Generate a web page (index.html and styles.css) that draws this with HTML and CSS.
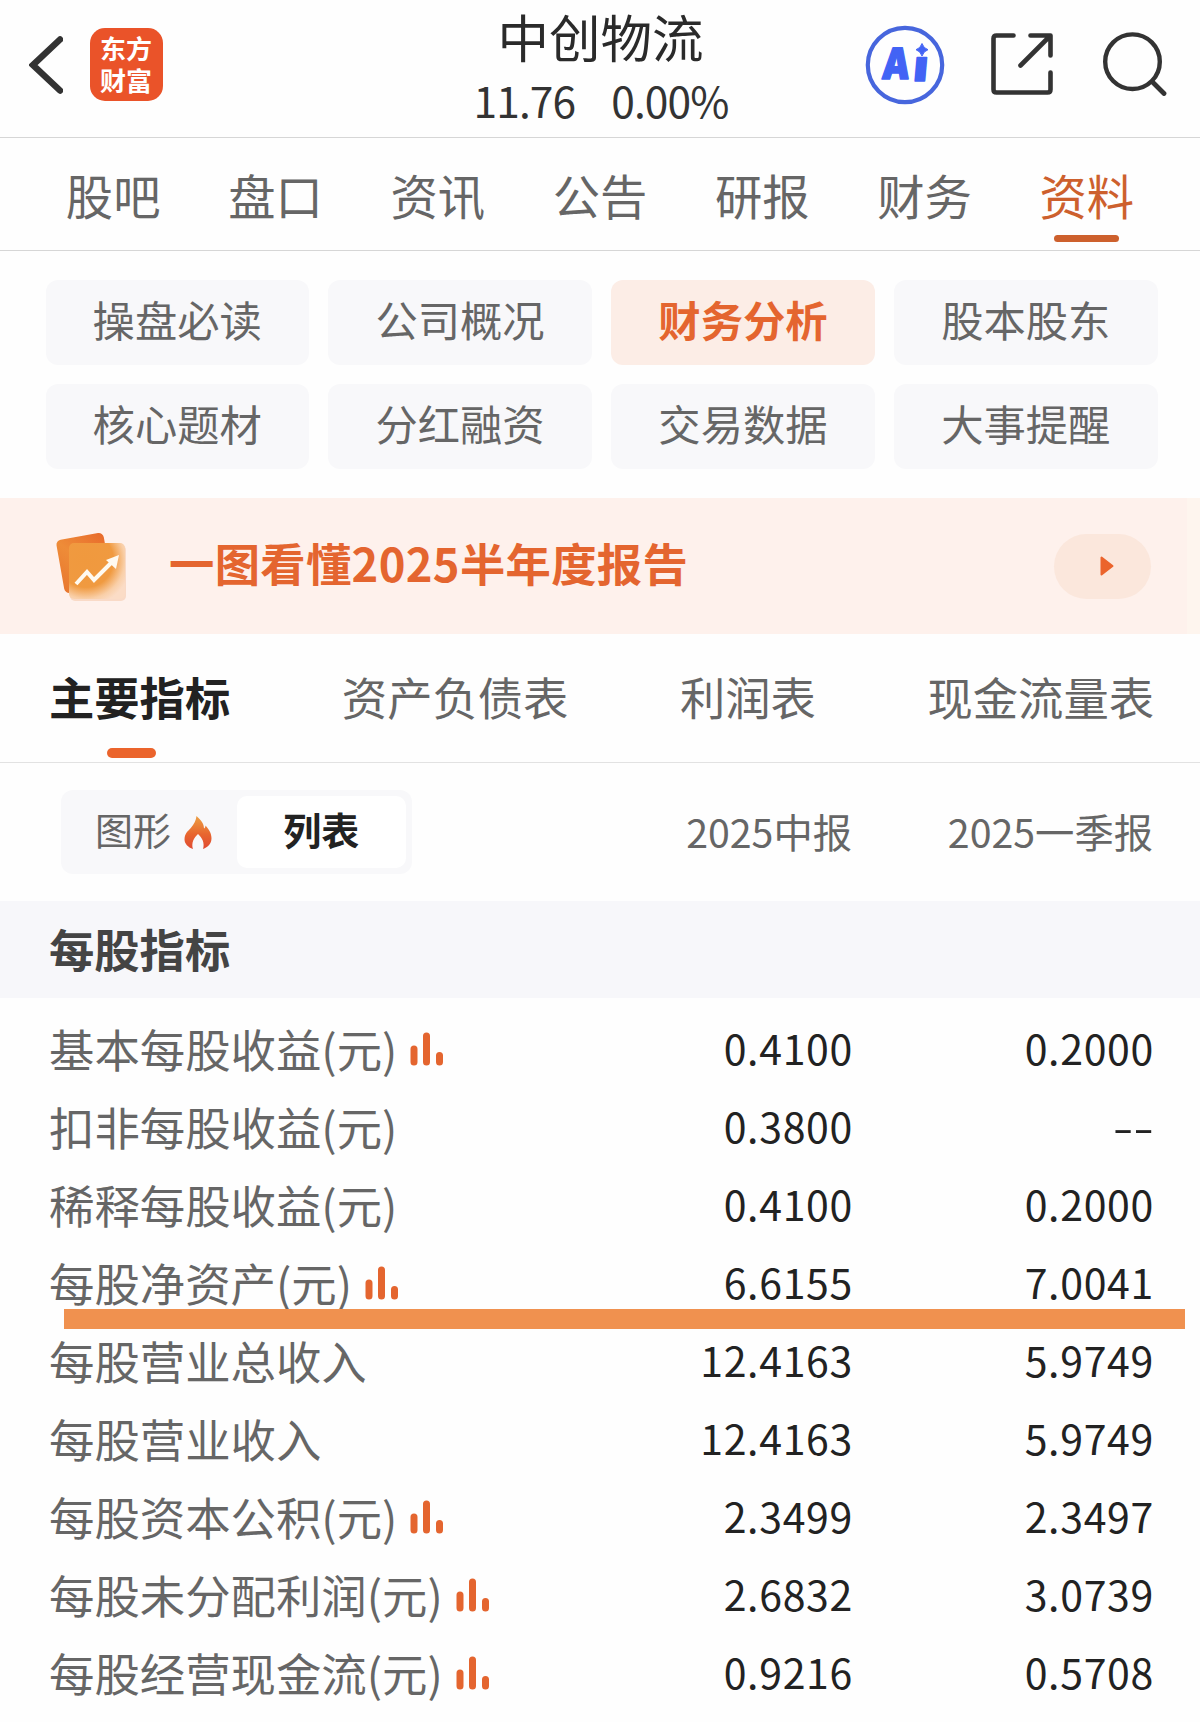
FILE: index.html
```html
<!DOCTYPE html>
<html lang="zh-CN">
<head>
    <meta charset="UTF-8">
    <meta name="viewport" content="width=device-width, initial-scale=1.0">
    <title>中创物流 - 财务分析</title>
    <link rel="stylesheet" href="styles.css">
</head>
<body>
    <svg width="0" height="0" class="defs">
        <symbol id="bars" viewBox="0 0 34 34">
            <path d="M4 17v13M16.500 4v26M29.500 23.500V30" fill="none" stroke="#e4652f" stroke-width="7" stroke-linecap="round"/>
        </symbol>
    </svg>

    <header class="header">
        <div class="header-left">
            <svg class="back" width="34" height="58" viewBox="0 0 34 58">
                <path d="M31 3.500L4 29l27 25.500" fill="none" stroke="#333" stroke-width="6.500" stroke-linecap="round"/>
            </svg>
            <div class="logo">东方财富</div>
        </div>
        <div class="stock">
            <h1>中创物流</h1>
            <p><span>11.76</span><span>0.00%</span></p>
        </div>
        <div class="header-right">
            <svg width="80" height="80" viewBox="0 0 80 80">
                <circle cx="40" cy="40" r="37.2" fill="none" stroke="#4766dd" stroke-width="4.2"/>
                <g class="ai-text" transform="translate(0 54) skewX(-5)">
                    <text x="16" y="0" textLength="28" lengthAdjust="spacingAndGlyphs">A</text>
                    <text x="48" y="1.500" textLength="14" lengthAdjust="spacingAndGlyphs">ı</text>
                </g>
                <path d="M57 18.500q1.500 4.800 6 6.200-4.500 1.500-6 6.300-1.500-4.800-6-6.300 4.500-1.400 6-6.200z" fill="#4263f5" stroke="#4263f5"/>
            </svg>
            <svg class="share" width="62" height="62" viewBox="0 0 62 62">
                <path d="M22.500 2.500H5.500q-3 0-3 3v51q0 3 3 3h51q3 0 3-3V39.500M39.500 2.500h20v20M58.500 3.500L29.500 32.500" fill="none" stroke="#333" stroke-width="4.600" stroke-linecap="round" stroke-linejoin="round"/>
            </svg>
            <svg class="search" width="64" height="64" viewBox="0 0 64 64">
                <circle cx="29.500" cy="29.700" r="27.300" fill="none" stroke="#333" stroke-width="4.400"/>
                <path d="M49.500 50L61 61.500" stroke="#333" stroke-width="4.800" stroke-linecap="round"/>
            </svg>
        </div>
    </header>

    <nav class="tabs">
        <a>股吧</a>
        <a>盘口</a>
        <a>资讯</a>
        <a>公告</a>
        <a>研报</a>
        <a>财务</a>
        <a class="active">资料</a>
    </nav>

    <div class="chips">
        <a>操盘必读</a>
        <a>公司概况</a>
        <a class="active">财务分析</a>
        <a>股本股东</a>
        <a>核心题材</a>
        <a>分红融资</a>
        <a>交易数据</a>
        <a>大事提醒</a>
    </div>

    <div class="banner">
        <svg width="76" height="76" viewBox="0 0 76 76">
            <defs>
                <linearGradient id="sheetBack" x1="1" y1="0" x2="0" y2="1">
                    <stop offset="0" stop-color="#e86a2b"/>
                    <stop offset=".5" stop-color="#ee8c38"/>
                    <stop offset="1" stop-color="#e8772f"/>
                </linearGradient>
                <radialGradient id="sheetFront" cx=".3" cy=".3" r=".82">
                    <stop offset="0" stop-color="#f0993e"/>
                    <stop offset=".6" stop-color="#f09a40"/>
                    <stop offset=".85" stop-color="#f9cfa8"/>
                    <stop offset="1" stop-color="#fbdcc6"/>
                </radialGradient>
            </defs>
            <rect x="7" y="8" width="48" height="54" rx="5" fill="url(#sheetBack)" transform="rotate(-10 31 35)"/>
            <rect x="17" y="17" width="56" height="56" rx="5" fill="#f3c3a2" opacity=".5"/>
            <rect x="16" y="15" width="56" height="56" rx="5" fill="url(#sheetFront)"/>
            <path d="M23 56l11-12 7 8 19-19" fill="none" stroke="#fffaf0" stroke-width="4"/>
            <path d="M66 27l-3 14-10-9z" fill="#fffaf0"/>
        </svg>
        <span class="banner-title">一图看懂2025半年度报告</span>
        <div class="banner-btn">
            <svg width="14" height="20" viewBox="0 0 14 20">
                <path d="M1.500 1.500v17L12.500 10z" fill="#eb642c" stroke="#eb642c" stroke-width="2" stroke-linejoin="round"/>
            </svg>
        </div>
    </div>

    <nav class="subtabs">
        <a class="active">主要指标</a>
        <a>资产负债表</a>
        <a>利润表</a>
        <a>现金流量表</a>
    </nav>

    <div class="toolbar">
        <div class="toggle">
            <div class="toggle-item">
                <span>图形</span>
                <svg width="28" height="34" viewBox="0 0 28 38" preserveAspectRatio="none">
                    <defs>
                        <linearGradient id="fire" x1="0" y1="0" x2="0" y2="1">
                            <stop offset="0" stop-color="#eca044"/>
                            <stop offset=".55" stop-color="#e8662f"/>
                            <stop offset="1" stop-color="#e04a32"/>
                        </linearGradient>
                    </defs>
                    <path d="M12.500 0c5 5 7.500 9 7.500 14 1-1 1.500-2 1.500-3.500C25 15 27.500 19 27.500 25c0 6-3.500 10-8.500 12 2-7-1-13-5-17-4 4-7 10-5 17C4 35 .5 31 .5 26 .5 19 4 17 7 13c3-4 5-8 5.500-13z" fill="url(#fire)"/>
                </svg>
            </div>
            <div class="toggle-item active"><span>列表</span></div>
        </div>
        <span class="period">2025中报</span>
        <span class="period">2025一季报</span>
    </div>

    <h2 class="section-title">每股指标</h2>

    <div class="table">
        <div class="row">
            <span class="label">基本每股收益(元)<svg><use href="#bars"/></svg></span>
            <span class="value">0.4100</span>
            <span class="value">0.2000</span>
        </div>
        <div class="row">
            <span class="label">扣非每股收益(元)</span>
            <span class="value">0.3800</span>
            <span class="value dash">--</span>
        </div>
        <div class="row">
            <span class="label">稀释每股收益(元)</span>
            <span class="value">0.4100</span>
            <span class="value">0.2000</span>
        </div>
        <div class="row marked">
            <span class="label">每股净资产(元)<svg><use href="#bars"/></svg></span>
            <span class="value">6.6155</span>
            <span class="value">7.0041</span>
        </div>
        <div class="row">
            <span class="label">每股营业总收入</span>
            <span class="value">12.4163</span>
            <span class="value">5.9749</span>
        </div>
        <div class="row">
            <span class="label">每股营业收入</span>
            <span class="value">12.4163</span>
            <span class="value">5.9749</span>
        </div>
        <div class="row">
            <span class="label">每股资本公积(元)<svg><use href="#bars"/></svg></span>
            <span class="value">2.3499</span>
            <span class="value">2.3497</span>
        </div>
        <div class="row">
            <span class="label">每股未分配利润(元)<svg><use href="#bars"/></svg></span>
            <span class="value">2.6832</span>
            <span class="value">3.0739</span>
        </div>
        <div class="row">
            <span class="label">每股经营现金流(元)<svg><use href="#bars"/></svg></span>
            <span class="value">0.9216</span>
            <span class="value">0.5708</span>
        </div>
    </div>
</body>
</html>
```

FILE: styles.css
```css
* {
    margin: 0;
    padding: 0;
    box-sizing: border-box;
}

body {
    width: 1200px;
    height: 1722px;
    font-family: "Noto Sans CJK SC", sans-serif;
    background: #fefefe;
    color: #666;
    overflow: hidden;
    white-space: nowrap;
}

svg {
    display: block;
    flex-shrink: 0;
}

.defs {
    display: none;
}

/* header */
.header {
    height: 138px;
    display: grid;
    grid-template-columns: 1fr auto 1fr;
    border-bottom: 1px solid #d6d6d6;
}

.header-left {
    display: flex;
    align-items: flex-start;
    padding: 28px 0 0 29px;
}

.back {
    margin-top: 8px;
}

.logo {
    width: 73px;
    height: 73px;
    margin-left: 27px;
    padding: 4px 10px 0;
    border-radius: 15px;
    background: #ea5329;
    color: #fff;
    font-size: 26px;
    font-weight: 700;
    line-height: 32px;
    white-space: normal;
}

.stock {
    text-align: center;
    color: #2a2a2a;
}

.stock h1 {
    padding-left: 1px;
    font-size: 51.500px;
    font-weight: 400;
    line-height: 72px;
}

.stock p {
    display: flex;
    justify-content: center;
    gap: 36px;
    padding-left: 2px;
    font-size: 42.500px;
    line-height: 56px;
    letter-spacing: -0.900px;
    color: #333;
}

.header-right {
    display: flex;
    justify-content: flex-end;
    padding: 25px 33px 0 0;
}

.share {
    margin: 8px 0 0 46px;
}

.search {
    margin: 7px 0 0 50px;
}

.ai-text {
    font-family: Inter, sans-serif;
    font-size: 43px;
    font-weight: 900;
    fill: #4263f5;
    stroke: #4263f5;
    stroke-width: 1.500;
    stroke-linejoin: round;
}

/* top tabs */
.tabs {
    height: 113px;
    display: grid;
    grid-template-columns: repeat(7, 1fr);
    padding: 0 32px;
    border-bottom: 1px solid #d6d6d6;
    font-size: 47.300px;
    line-height: 113px;
    text-align: center;
}

.tabs a {
    position: relative;
}

.tabs .active {
    color: #cd602d;
}

.tabs .active::after {
    content: '';
    position: absolute;
    left: 50%;
    bottom: 9px;
    width: 65px;
    height: 7px;
    margin-left: -33px;
    border-radius: 4px;
    background: #cd602d;
}

/* category chips */
.chips {
    display: grid;
    grid-template-columns: repeat(4, 1fr);
    gap: 19px 19.500px;
    padding: 29px 42.500px 29px 45.500px;
}

.chips a {
    height: 85px;
    border-radius: 12px;
    background: #f8f8fa;
    font-size: 42.300px;
    line-height: 77px;
    text-align: center;
}

.chips .active {
    background: #fcede6;
    color: #e4652f;
    font-weight: 700;
}

/* report banner */
.banner {
    height: 136px;
    display: flex;
    align-items: center;
    padding: 0 36px 0 53px;
    border-right: 13px solid #fef5ee;
    background: #fef1ec;
}

.banner-title {
    flex: 1;
    margin: -8px 0 0 40px;
    color: #e4652f;
    font-size: 45.300px;
    font-weight: 700;
    letter-spacing: 0.350px;
}

.banner-btn {
    display: flex;
    align-items: center;
    width: 97px;
    height: 65px;
    padding-left: 46px;
    border-radius: 33px;
    background: #fbe7dc;
}

/* statement tabs */
.subtabs {
    height: 129px;
    display: flex;
    justify-content: space-between;
    padding: 0 46px 0 49px;
    border-bottom: 1px solid #e2e2e2;
    font-size: 45.300px;
    line-height: 125px;
}

.subtabs a {
    position: relative;
}

.subtabs .active {
    color: #222;
    font-weight: 700;
}

.subtabs .active::after {
    content: '';
    position: absolute;
    left: 58px;
    bottom: 4px;
    width: 49px;
    height: 10px;
    border-radius: 5px;
    background: #eb642c;
}

/* view toggle and periods */
.toolbar {
    height: 138px;
    display: grid;
    grid-template-columns: 1fr 301px 301px;
    padding: 27px 47px 0 61px;
}

.toggle {
    display: flex;
    width: 351px;
    height: 84px;
    padding: 6px;
    border-radius: 12px;
    background: #f8f8fa;
    font-size: 38px;
    line-height: 66px;
}

.toggle-item {
    display: flex;
    width: 170px;
    height: 72px;
    padding-left: 28px;
}

.toggle-item svg {
    margin: 20px 0 0 13px;
}

.toggle-item.active {
    justify-content: center;
    padding: 0;
    border-radius: 10px;
    background: #fff;
    color: #222;
    font-weight: 700;
}

.period {
    font-size: 39.300px;
    line-height: 82px;
    text-align: right;
}

/* indicators */
.section-title {
    height: 97px;
    padding-left: 49px;
    background: #f7f7fa;
    color: #444;
    font-size: 45.300px;
    line-height: 94px;
}

.table {
    padding-top: 12px;
}

.row {
    position: relative;
    display: grid;
    grid-template-columns: 1fr 301px 301px;
    height: 78px;
    padding: 0 46px 0 49px;
    line-height: 76px;
}

.label {
    display: flex;
    font-size: 45.400px;
}

.label svg {
    width: 34px;
    height: 34px;
    margin: 22px 0 0 13px;
}

.value {
    color: #222;
    font-size: 41px;
    letter-spacing: 0.700px;
    line-height: 74px;
    text-align: right;
}

.dash {
    letter-spacing: 0;
    transform: scaleX(1.450);
    transform-origin: right;
}

.marked::after {
    content: '';
    position: absolute;
    left: 64px;
    top: 65px;
    width: 1121px;
    height: 20px;
    background: #f0914f;
    z-index: 1;
}
```
